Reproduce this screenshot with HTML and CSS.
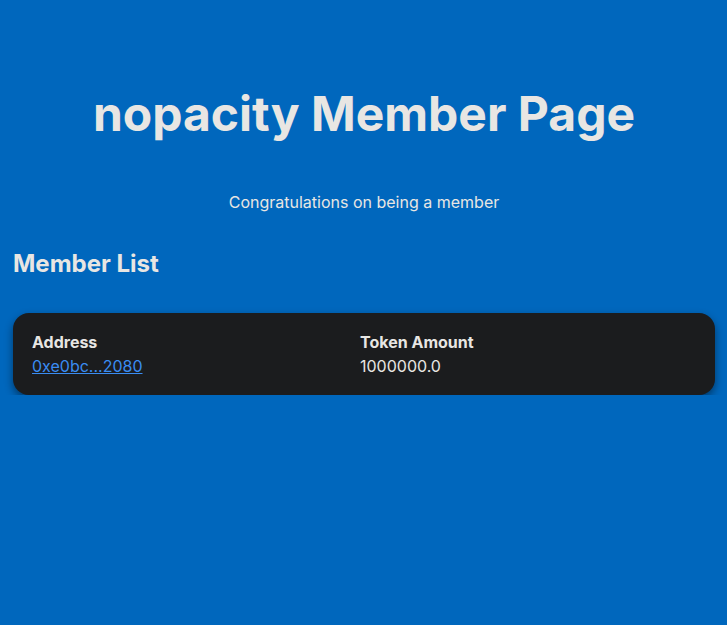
FILE: index.html
```html
<!DOCTYPE html>
<html>
<head>
<meta charset="utf-8">
<link rel="stylesheet" href="styles.css">
</head>
<body>
<main class="page">
  <h1 class="title">nopacity Member Page</h1>
  <p class="subtitle">Congratulations on being a member</p>
  <h2 class="section-title">Member List</h2>
  <div class="card">
    <div class="col">
      <div class="label">Address</div>
      <a class="link" href="#">0xe0bc...2080</a>
    </div>
    <div class="col">
      <div class="label">Token Amount</div>
      <div class="value">1000000.0</div>
    </div>
  </div>
</main>
</body>
</html>
```
FILE: styles.css
```css
html, body {
  margin: 0;
  padding: 0;
  background: #0067bd;
}
body {
  font-family: Inter, "Noto Sans", sans-serif;
  color: #e8e6e3;
  font-size: 16px;
}
.page {
  padding: 0 12px 0 13px;
}
.title {
  margin: 0;
  padding-top: 83px;
  text-align: center;
  font-size: 48px;
  font-weight: 700;
  line-height: 62px;
}
.subtitle {
  margin: 45px 0 0;
  text-align: center;
  line-height: 24px;
}
.section-title {
  margin: 35px 0 0;
  font-size: 24px;
  font-weight: 700;
  line-height: 30px;
}
.card {
  margin-top: 34px;
  background: #1b1c1e;
  border-radius: 16px;
  padding: 17px 19px 17px;
  display: grid;
  grid-template-columns: 328px 1fr;
  box-shadow: 0 4px 8px rgba(0, 0, 0, 0.45);
}
.label {
  font-weight: 700;
  line-height: 24px;
}
.link {
  color: #3a8cf2;
  text-decoration: underline;
  line-height: 24px;
}
.value {
  line-height: 24px;
}
```
